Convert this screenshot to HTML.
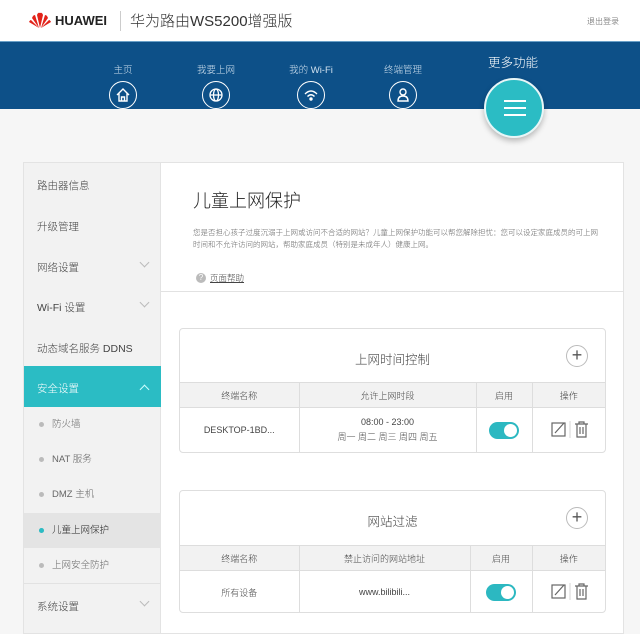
<!DOCTYPE html>
<html><head><meta charset="utf-8"><style>
*{margin:0;padding:0;box-sizing:border-box}
body{width:640px;height:634px;overflow:hidden;background:#f6f6f6;font-family:"Liberation Sans","Noto Sans CJK SC",sans-serif;font-weight:300;color:#444;position:relative}
.abs{position:absolute}
.hdr{left:0;top:0;width:640px;height:41px;background:#fff}
.band{left:0;top:41px;width:640px;height:68px;background:#0d5088;border-top:1px solid #6aa0c8}
.nav{top:62px;width:60px;text-align:center;color:#cfe0ee;font-size:9.5px}
.nav .c{width:28px;height:28px;border:1.5px solid #fff;border-radius:50%;margin:5px auto 0;display:flex;align-items:center;justify-content:center}
.side{left:23px;top:162px;width:138px;height:472px;background:#f2f2f2;border:1px solid #e3e3e3}
.si{position:absolute;left:13px;font-size:10.5px;color:#444}
.chev{position:absolute;right:12px;width:7px;height:7px;border-right:1px solid #bbb;border-bottom:1px solid #bbb;transform:rotate(45deg)}
.sub{position:absolute;left:0;width:137px;height:35px;font-size:9.5px;color:#666;line-height:35px;padding-left:28px}
.sub:before{content:"";position:absolute;left:15px;top:15px;width:5px;height:5px;border-radius:50%;background:#bbb}
.main{left:161px;top:162px;width:463px;height:472px;background:#fff;border:1px solid #e3e3e3;border-left:none}
.card{position:absolute;left:179px;width:427px;background:#fff;border:1px solid #dedede;border-radius:4px;overflow:hidden}
.ct{position:absolute;width:100%;text-align:center;font-size:12.5px;color:#444}
.plus{position:absolute;right:17px;width:22px;height:22px;border:1px solid #bbb;border-radius:50%;font-size:18px;line-height:19px;text-align:center;color:#555}
table{position:absolute;left:0;width:100%;border-collapse:collapse;font-size:9px;text-align:center;color:#444}
th{background:#f2f2f2;font-weight:300;height:25px;border-right:1px solid #ddd;border-top:1px solid #ddd;border-bottom:1px solid #ddd}
td{border-right:1px solid #ddd}
th:last-child,td:last-child{border-right:none}
.tg{display:inline-block;width:30px;height:17px;border-radius:9px;background:#2cb8c1;position:relative;vertical-align:middle}
.tg:after{content:"";position:absolute;right:2px;top:2px;width:13px;height:13px;border-radius:50%;background:#fff}
</style></head><body>
<div class="abs hdr">
 <svg class="abs" style="left:29px;top:12px" width="22" height="17" viewBox="0 0 22 17"><g fill="#e2231a"><path d="M11 16 L8 3 Q9 0 11 1Z"/><path d="M11 16 L14 3 Q13 0 11 1Z"/><path d="M10 16 L3 6 Q4 3 6 3Z"/><path d="M12 16 L19 6 Q18 3 16 3Z"/><path d="M10 16 L0 10 Q1 8 2 8Z"/><path d="M12 16 L22 10 Q21 8 20 8Z"/></g></svg>
 <div class="abs" style="left:55px;top:13px;font-size:13px;font-weight:bold;color:#222">HUAWEI</div>
 <div class="abs" style="left:120px;top:11px;width:1px;height:20px;background:#ccc"></div>
 <div class="abs" style="left:130px;top:10px;font-size:15px;color:#333">华为路由WS5200增强版</div>
 <div class="abs" style="left:587px;top:16px;font-size:8px;color:#555">退出登录</div>
</div>
<div class="abs band"></div>
<div class="abs nav" style="left:93px">主页<div class="c"><svg width="16" height="16" viewBox="0 0 16 16" fill="none" stroke="#fff" stroke-width="1.4"><path d="M2 8 L8 2 L14 8 M4 6.5 V14 H12 V6.5 M6.5 14 V10 H9.5 V14"/></svg></div></div>
<div class="abs nav" style="left:186px">我要上网<div class="c"><svg width="16" height="16" viewBox="0 0 16 16" fill="none" stroke="#fff" stroke-width="1.3"><circle cx="8" cy="8" r="6"/><ellipse cx="8" cy="8" rx="2.5" ry="6"/><path d="M2 8 H14"/></svg></div></div>
<div class="abs nav" style="left:281px">我的 Wi-Fi<div class="c"><svg width="16" height="16" viewBox="0 0 16 16" fill="none" stroke="#fff" stroke-width="1.4"><path d="M2 7 Q8 1 14 7 M4.5 9.5 Q8 6 11.5 9.5"/><circle cx="8" cy="12" r="1" fill="#fff"/></svg></div></div>
<div class="abs nav" style="left:373px">终端管理<div class="c"><svg width="16" height="16" viewBox="0 0 16 16" fill="none" stroke="#fff" stroke-width="1.4"><circle cx="8" cy="5" r="3"/><path d="M3 14 Q3 9 8 9 Q13 9 13 14Z"/></svg></div></div>
<div class="abs" style="left:488px;top:52px;font-size:12.5px;color:#fff">更多功能</div>
<div class="abs" style="left:484px;top:78px;width:60px;height:60px;border-radius:50%;background:#2bbcc4;border:2px solid #e8f6f7;box-shadow:0 3px 6px rgba(0,0,0,.25)">
 <div style="position:absolute;left:18px;top:20px;width:22px;height:2px;background:#fff"></div>
 <div style="position:absolute;left:18px;top:27px;width:22px;height:2px;background:#fff"></div>
 <div style="position:absolute;left:18px;top:34px;width:22px;height:2px;background:#fff"></div>
</div>

<div class="abs side">
 <div class="si" style="top:15px">路由器信息</div>
 <div class="si" style="top:56px">升级管理</div>
 <div class="si" style="top:97px">网络设置</div><div class="chev" style="top:96px"></div>
 <div class="si" style="top:137px">Wi-Fi 设置</div><div class="chev" style="top:136px"></div>
 <div class="si" style="top:178px">动态域名服务 DDNS</div>
 <div style="position:absolute;left:0;top:203px;width:137px;height:41px;background:#2bbcc4"></div>
 <div class="si" style="top:218px;color:#fff">安全设置</div>
 <div style="position:absolute;right:12px;top:223px;width:7px;height:7px;border-left:1px solid #cff;border-top:1px solid #cff;transform:rotate(45deg)"></div>
 <div class="sub" style="top:244px">防火墙</div>
 <div class="sub" style="top:279px">NAT 服务</div>
 <div class="sub" style="top:314px">DMZ 主机</div>
 <div class="sub" style="top:350px;background:#e4e4e4;color:#222">儿童上网保护</div>
 <div style="position:absolute;left:15px;top:365px;width:5px;height:5px;border-radius:50%;background:#2bbcc4"></div>
 <div class="sub" style="top:385px">上网安全防护</div>
 <div style="position:absolute;left:0;top:420px;width:137px;height:1px;background:#e2e2e2"></div>
 <div class="si" style="top:436px">系统设置</div><div class="chev" style="top:435px"></div>
</div>

<div class="abs main">
 <div style="position:absolute;left:32px;top:24px;font-size:18px;color:#222">儿童上网保护</div>
 <div style="position:absolute;left:32px;top:64px;width:410px;font-size:7.5px;line-height:12px;color:#666">您是否担心孩子过度沉溺于上网或访问不合适的网站？儿童上网保护功能可以帮您解除担忧：您可以设定家庭成员的可上网时间和不允许访问的网站，帮助家庭成员（特别是未成年人）健康上网。</div>
 <div style="position:absolute;left:35px;top:110px;width:10px;height:10px;border-radius:50%;background:#bbb;color:#fff;font-size:8px;line-height:10px;text-align:center">?</div>
 <div style="position:absolute;left:49px;top:109px;font-size:8.5px;color:#444;text-decoration:underline">页面帮助</div>
 <div style="position:absolute;left:0;top:128px;width:463px;height:1px;background:#e2e2e2"></div>
</div>

<div class="card" style="top:328px;height:125px">
 <div class="ct" style="top:20px">上网时间控制</div><div class="plus" style="top:16px">+</div>
 <table style="top:53px"><tr><th style="width:119px">终端名称</th><th style="width:177px">允许上网时段</th><th style="width:56px">启用</th><th>操作</th></tr>
 <tr style="height:45px"><td>DESKTOP-1BD...</td><td style="line-height:15px">08:00 - 23:00<br>周一 周二 周三 周四 周五</td><td><span class="tg"></span></td><td><svg width="46" height="20" viewBox="0 0 46 20" fill="none" stroke="#666" stroke-width="1.2"><rect x="6" y="4" width="13" height="13"/><path d="M9 14 L18 4"/><path d="M24 2 V19" stroke="#ddd"/><path d="M29 5 H42 M33 5 V3 H38 V5 M31 5 V18 H40 V5 M34 8 V15 M37 8 V15"/></svg></td></tr></table>
</div>

<div class="card" style="top:490px;height:123px">
 <div class="ct" style="top:20px">网站过滤</div><div class="plus" style="top:16px">+</div>
 <table style="top:54px"><tr><th style="width:119px">终端名称</th><th style="width:171px">禁止访问的网站地址</th><th style="width:62px">启用</th><th>操作</th></tr>
 <tr style="height:43px"><td>所有设备</td><td>www.bilibili...</td><td><span class="tg"></span></td><td><svg width="46" height="20" viewBox="0 0 46 20" fill="none" stroke="#666" stroke-width="1.2"><rect x="6" y="4" width="13" height="13"/><path d="M9 14 L18 4"/><path d="M24 2 V19" stroke="#ddd"/><path d="M29 5 H42 M33 5 V3 H38 V5 M31 5 V18 H40 V5 M34 8 V15 M37 8 V15"/></svg></td></tr></table>
</div>
</body></html>
